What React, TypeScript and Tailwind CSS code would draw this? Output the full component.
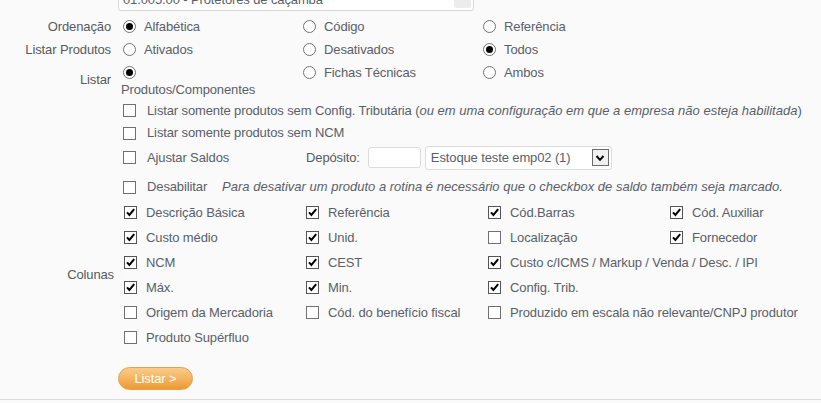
import React from "react";

const Radio = ({ checked }: { checked?: boolean }) => (
  <span className="w-[13px] h-[13px] rounded-full border border-[#737373] bg-white flex items-center justify-center shrink-0">
    {checked && <span className="w-[7px] h-[7px] rounded-full bg-black" />}
  </span>
);

const Check = ({ checked }: { checked?: boolean }) => (
  <span
    className={
      "w-[13px] h-[13px] border bg-white flex items-center justify-center shrink-0 " +
      (checked ? "border-[#555]" : "border-[#707070]")
    }
  >
    {checked && (
      <svg viewBox="0 0 11 11" className="w-[11px] h-[11px]">
        <path d="M2 5.3 L4.4 8 L9.2 2.2" stroke="#000" strokeWidth="2" fill="none" />
      </svg>
    )}
  </span>
);

const RadioItem = ({ label, checked }: { label: string; checked?: boolean }) => (
  <div className="flex items-center gap-[8px] pl-[5px] h-[23px] whitespace-nowrap">
    <Radio checked={checked} />
    <span>{label}</span>
  </div>
);

const Label = ({ children, pr = "pr-[7px]" }: { children: React.ReactNode; pr?: string }) => (
  <div className={"w-[118px] shrink-0 flex items-center justify-end text-[#555a61] whitespace-nowrap " + pr}>
    {children}
  </div>
);

const CheckRow = ({ label, checked }: { label: string; checked?: boolean }) => (
  <div className="flex items-center gap-[11px] whitespace-nowrap">
    <Check checked={checked} />
    <span>{label}</span>
  </div>
);

const cols: [string, boolean][][] = [
  [
    ["Descrição Básica", true],
    ["Referência", true],
    ["Cód.Barras", true],
    ["Cód. Auxiliar", true],
  ],
  [
    ["Custo médio", true],
    ["Unid.", true],
    ["Localização", false],
    ["Fornecedor", true],
  ],
  [
    ["NCM", true],
    ["CEST", true],
    ["Custo c/ICMS / Markup / Venda / Desc. / IPI", true],
  ],
  [
    ["Máx.", true],
    ["Min.", true],
    ["Config. Trib.", true],
  ],
  [
    ["Origem da Mercadoria", false],
    ["Cód. do benefício fiscal", false],
    ["Produzido em escala não relevante/CNPJ produtor", false],
  ],
  [["Produto Supérfluo", false]],
];

export default function App() {
  return (
    <div className="w-[821px] h-[403px] overflow-hidden bg-[#fafafa] font-['Liberation_Sans',Arial,sans-serif] text-[13px] tracking-[-0.12px] text-[#59606a] flex flex-col">
      {/* top partially visible input */}
      <div className="h-[11px] shrink-0 flex items-end overflow-hidden">
        <div className="ml-[118px] w-[356px] h-[26px] shrink-0 border border-[#d4d4d4] rounded-[3px] bg-white flex items-end justify-between pl-[4px] pr-[2px]">
          <span className="leading-[13px] pb-[4px] whitespace-nowrap">01.005.00 - Protetores de caçamba</span>
          <span className="w-[17px] h-[20px] mb-[2px] bg-[#ececec] rounded-[2px]" />
        </div>
      </div>

      <div className="h-[4px] shrink-0" />

      {/* Ordenação */}
      <div className="flex h-[23px] shrink-0">
        <Label>Ordenação</Label>
        <div className="grid grid-cols-[180px_180px_180px]">
          <RadioItem label="Alfabética" checked />
          <RadioItem label="Código" />
          <RadioItem label="Referência" />
        </div>
      </div>

      {/* Listar Produtos */}
      <div className="flex h-[23px] shrink-0">
        <Label>Listar Produtos</Label>
        <div className="grid grid-cols-[180px_180px_180px]">
          <RadioItem label="Ativados" />
          <RadioItem label="Desativados" />
          <RadioItem label="Todos" checked />
        </div>
      </div>

      {/* Listar */}
      <div className="flex h-[38px] shrink-0">
        <Label>Listar</Label>
        <div className="grid grid-cols-[180px_180px_180px] items-start">
          <div className="flex flex-col">
            <div className="pl-[5px] mt-[5px]">
              <Radio checked />
            </div>
            <span className="pl-[3px] mt-[2px] leading-[17px] whitespace-nowrap">Produtos/Componentes</span>
          </div>
          <RadioItem label="Fichas Técnicas" />
          <RadioItem label="Ambos" />
        </div>
      </div>

      {/* checkbox rows */}
      <div className="flex h-[23px] shrink-0 items-center pl-[123px]">
        <div className="flex items-center gap-[11px] whitespace-nowrap">
          <Check />
          <span>
            Listar somente produtos sem Config. Tributária (<i className="tracking-normal">ou em uma configuração em que a empresa não esteja habilitada</i>)
          </span>
        </div>
      </div>
      <div className="flex h-[22px] shrink-0 items-center pl-[123px]">
        <CheckRow label="Listar somente produtos sem NCM" />
      </div>
      <div className="flex h-[27px] shrink-0 items-center pl-[123px]">
        <div className="w-[183px] shrink-0">
          <CheckRow label="Ajustar Saldos" />
        </div>
        <span className="text-[#555a61]">Depósito:</span>
        <div className="ml-[8px] w-[53px] h-[21px] border border-[#dcdcdc] rounded-[3px] bg-white" />
        <div className="ml-[4px] w-[187px] h-[24px] border border-[#dcdcdc] rounded-[3px] bg-white flex items-center justify-between pl-[5px] pr-[2px]">
          <span className="whitespace-nowrap">Estoque teste emp02 (1)</span>
          <span className="w-[17px] h-[17px] border border-[#6b6b6b] bg-[#f0f0f0] flex items-center justify-center">
            <svg viewBox="0 0 10 10" className="w-[10px] h-[10px]">
              <path d="M1.5 3 L5 6.8 L8.5 3" stroke="#000" strokeWidth="1.9" fill="none" />
            </svg>
          </span>
        </div>
      </div>
      <div className="flex h-[29px] shrink-0 items-center pt-[3px] pl-[123px]">
        <CheckRow label="Desabilitar" />
        <i className="ml-[15px] whitespace-nowrap tracking-normal">
          Para desativar um produto a rotina é necessário que o checkbox de saldo também seja marcado.
        </i>
      </div>

      {/* Colunas */}
      <div className="flex h-[150px] shrink-0">
        <Label pr="pr-[4px]">Colunas</Label>
        <div className="flex flex-col pl-[6px]">
          {cols.map((row, i) => (
            <div key={i} className="grid grid-cols-[182px_182px_182px_182px] h-[25px]">
              {row.map(([label, checked], j) => (
                <div key={j} className="flex items-center gap-[9px] whitespace-nowrap">
                  <Check checked={checked} />
                  <span>{label}</span>
                </div>
              ))}
            </div>
          ))}
        </div>
      </div>

      {/* button */}
      <div className="mt-[17px] ml-[118px] shrink-0">
        <button className="w-[75px] h-[23px] rounded-full bg-gradient-to-b from-[#f9cc88] to-[#ee9a2c] border border-[#e3a150] text-white text-[13px] leading-none flex items-center justify-center font-['Liberation_Sans',Arial,sans-serif]">
          Listar &gt;
        </button>
      </div>

      <div className="mt-[9px] border-t border-[#dcdcdc] shrink-0" />
    </div>
  );
}
